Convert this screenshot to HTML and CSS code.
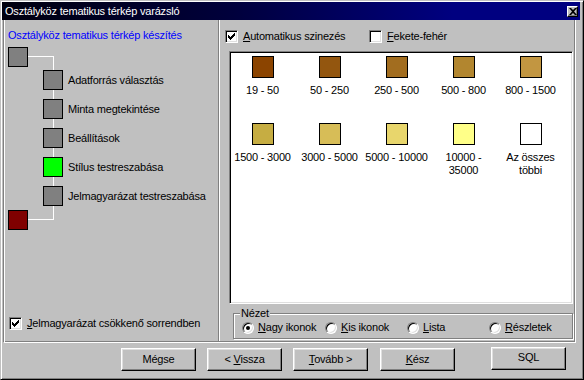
FILE: index.html
```html
<!DOCTYPE html>
<html lang="hu">
<head>
    <meta charset="UTF-8">
    <title>Osztályköz tematikus térkép varázsló</title>
    <link rel="stylesheet" href="styles.css">
</head>
<body>
<div class="window">
    <div class="titlebar">
        <span class="title">Osztályköz tematikus térkép varázsló</span>
        <span class="close">
            <svg width="8" height="7" viewBox="0 0 8 7"><path d="M0 0h2l2 2 2-2h2L5 3.5 8 7H6L4 5 2 7H0l3-3.5z" fill="#000"/></svg>
        </span>
    </div>

    <div class="frame">
        <div class="steps-panel">
            <div class="heading">Osztályköz tematikus térkép készítés</div>
            <div class="tree">
                <div class="line line-top"></div>
                <div class="line line-down"></div>
                <div class="line line-bottom"></div>
                <div class="node"></div>
                <ul class="steps">
                    <li><span class="node"></span>Adatforrás választás</li>
                    <li><span class="node"></span>Minta megtekintése</li>
                    <li><span class="node"></span>Beállítások</li>
                    <li><span class="node node-current"></span>Stílus testreszabása</li>
                    <li><span class="node"></span>Jelmagyarázat testreszabása</li>
                </ul>
                <div class="node node-end"></div>
            </div>
            <label class="check sort-check">
                <span class="box"><svg width="9" height="9" viewBox="-1 -1 9 9"><path d="M0 2h1v1h1v1h1V3h1V2h1V1h1V0h1v3H6v1H5v1H4v1H3v1H2V6H1V5H0z" fill="#000"/></svg></span>
                <span><u>J</u>elmagyarázat csökkenő sorrendben</span>
            </label>
        </div>

        <div class="legend-panel">
            <div class="check-row">
                <label class="check check-auto">
                    <span class="box"><svg width="9" height="9" viewBox="-1 -1 9 9"><path d="M0 2h1v1h1v1h1V3h1V2h1V1h1V0h1v3H6v1H5v1H4v1H3v1H2V6H1V5H0z" fill="#000"/></svg></span>
                    <span><u>A</u>utomatikus szinezés</span>
                </label>
                <label class="check">
                    <span class="box"></span>
                    <span><u>F</u>ekete-fehér</span>
                </label>
            </div>

            <div class="listview">
                <div class="items">
                    <div class="item"><span class="swatch" style="background:#8b4400"></span><span class="caption">19 - 50</span></div>
                    <div class="item"><span class="swatch" style="background:#93560f"></span><span class="caption">50 - 250</span></div>
                    <div class="item"><span class="swatch" style="background:#a26d1f"></span><span class="caption">250 - 500</span></div>
                    <div class="item"><span class="swatch" style="background:#b2862f"></span><span class="caption">500 - 800</span></div>
                    <div class="item"><span class="swatch" style="background:#c29641"></span><span class="caption">800 - 1500</span></div>
                    <div class="item"><span class="swatch" style="background:#c6ad42"></span><span class="caption">1500 - 3000</span></div>
                    <div class="item"><span class="swatch" style="background:#d7bd57"></span><span class="caption">3000 - 5000</span></div>
                    <div class="item"><span class="swatch" style="background:#e8d66c"></span><span class="caption">5000 - 10000</span></div>
                    <div class="item"><span class="swatch" style="background:#ffff88"></span><span class="caption">10000 - 35000</span></div>
                    <div class="item"><span class="swatch" style="background:#ffffff"></span><span class="caption">Az összes többi</span></div>
                </div>
            </div>

            <div class="group">
                <span class="group-title">Nézet</span>
                <div class="radios">
                    <label class="opt"><span class="radio on"></span><span><u>N</u>agy ikonok</span></label>
                    <label class="opt"><span class="radio"></span><span><u>K</u>is ikonok</span></label>
                    <label class="opt"><span class="radio"></span><span><u>L</u>ista</span></label>
                    <label class="opt"><span class="radio"></span><span><u>R</u>észletek</span></label>
                </div>
            </div>
        </div>
    </div>

    <div class="buttons">
        <button class="btn">Mégse</button>
        <button class="btn">&lt; <u>V</u>issza</button>
        <button class="btn"><u>T</u>ovább &gt;</button>
        <button class="btn btn-done"><u>K</u>ész</button>
        <button class="btn btn-sql">SQL</button>
    </div>
</div>
</body>
</html>
```

FILE: styles.css
```css
*{
    margin: 0;
    padding: 0;
    box-sizing: border-box;
}
body{
    background-color: #c0c0c0;
    font: 11px/13px "Liberation Sans", Arial, sans-serif;
    letter-spacing: -0.2px;
    color: #000;
}
.window{
    width: 584px;
    height: 380px;
    display: flex;
    flex-direction: column;
    background-color: #c0c0c0;
    border: 1px solid;
    border-color: #c0c0c0 #000 #000 #c0c0c0;
    box-shadow: inset 1px 1px #fff, inset -1px -1px #808080;
    padding: 1px 3px 3px 1px;
}

/* title bar */
.titlebar{
    height: 18px;
    flex: none;
    display: flex;
    align-items: center;
    justify-content: space-between;
    padding: 0 2px 0 3px;
    background: linear-gradient(90deg, #00000e, #00003c 40%, #000080 78%);
    color: #fff;
}
.close{
    width: 11px;
    height: 11px;
    display: flex;
    align-items: center;
    justify-content: center;
    background-color: #c0c0c0;
    border: 1px solid;
    border-color: #fff #000 #000 #fff;
    box-shadow: inset -1px -1px #808080;
}

/* main frame */
.frame{
    height: 323px;
    flex: none;
    display: flex;
    margin: 0 4px 0 1px;
    border: 1px solid;
    border-top: 0;
    border-color: #fff #fff #fff #808080;
    padding: 0 1px 1px 1px;
    box-shadow: inset 1px 0 #fff, inset -1px -1px #808080;
}

/* left side: steps */
.steps-panel{
    width: 214px;
    display: flex;
    flex-direction: column;
    border-right: 1px solid #808080;
    padding: 9px 0 11px 3px;
}
.heading{
    color: #0000ff;
}
.tree{
    position: relative;
    margin-top: 5px;
}
.tree .line{
    position: absolute;
    background-color: #fff;
}
.line-top{
    left: 20px;
    top: 9px;
    width: 26px;
    height: 1px;
}
.line-down{
    left: 45px;
    top: 9px;
    width: 1px;
    height: 164px;
}
.line-bottom{
    left: 20px;
    top: 172px;
    width: 26px;
    height: 1px;
}
.node{
    position: relative;
    display: block;
    width: 20px;
    height: 20px;
    flex: none;
    border: 1px solid #000;
    background-color: #808080;
}
.node-current{
    background-color: #00ff00;
}
.node-end{
    background-color: #800000;
}
.steps{
    list-style: none;
    margin: 3px 0 4px 35px;
    display: flex;
    flex-direction: column;
    gap: 9px;
}
.steps li{
    display: flex;
    align-items: center;
    gap: 5px;
    height: 20px;
}
.sort-check{
    margin: auto 0 0 1px;
}

/* check boxes */
.check{
    display: flex;
    align-items: center;
    gap: 5px;
    height: 13px;
}
.box{
    width: 13px;
    height: 13px;
    flex: none;
    display: flex;
    align-items: center;
    justify-content: center;
    background-color: #fff;
    border: 1px solid;
    border-color: #808080 #fff #fff #808080;
    box-shadow: inset 1px 1px #000, inset -1px -1px #dfdfdf;
}

/* right side: legend */
.legend-panel{
    flex: 1;
    display: flex;
    flex-direction: column;
    align-items: flex-start;
    border-left: 1px solid #fff;
    padding: 10px 0 1px 5px;
}
.check-row{
    display: flex;
}
.check-auto{
    width: 144px;
}
.listview{
    width: 344px;
    height: 253px;
    margin: 8px 0 0 4px;
    background-color: #fff;
    border: 1px solid;
    border-color: #808080 #fff #fff #808080;
    box-shadow: inset 1px 1px #000, inset -1px -1px #dfdfdf;
    padding-top: 4px;
}
.items{
    display: grid;
    grid-template-columns: repeat(5, 67px);
    grid-auto-rows: 67px;
    margin-left: -1px;
}
.item{
    display: flex;
    flex-direction: column;
    align-items: center;
}
.swatch{
    width: 22px;
    height: 22px;
    border: 1px solid #000;
    margin-bottom: 6px;
}
.caption{
    width: 66px;
    text-align: center;
}

/* view group */
.group{
    position: relative;
    width: 340px;
    height: 26px;
    margin: 9px 0 0 8px;
    border: 1px solid #808080;
    box-shadow: inset 1px 1px #fff, 1px 1px #fff;
    padding: 7px 0 0 8px;
}
.group-title{
    position: absolute;
    top: -7px;
    left: 6px;
    padding: 0 1px;
    background-color: #c0c0c0;
}
.radios{
    display: grid;
    grid-template-columns: 83px 82px 82px auto;
}
.opt{
    display: flex;
    align-items: center;
    gap: 4px;
    height: 13px;
}
.radio{
    position: relative;
    width: 12px;
    height: 12px;
    border-radius: 50%;
    background-color: #fff;
    border: 1px solid;
    border-color: #808080 #fff #fff #808080;
    box-shadow: inset 1px 1px #000, inset -1px -1px #dfdfdf;
}
.radio.on::after{
    content: '';
    position: absolute;
    left: 3px;
    top: 3px;
    width: 4px;
    height: 4px;
    border-radius: 50%;
    background-color: #000;
}

/* bottom buttons */
.buttons{
    flex: 1;
    display: flex;
    justify-content: flex-end;
    align-items: flex-start;
    padding: 5px 14px 0 0;
}
.btn{
    width: 75px;
    height: 23px;
    margin-left: 11px;
    font: inherit;
    letter-spacing: inherit;
    color: #000;
    background-color: #c0c0c0;
    border: 1px solid;
    border-color: #fff #000 #000 #fff;
    box-shadow: inset -1px -1px #808080, inset 1px 1px #dfdfdf;
}
.btn-done{
    margin-left: 12px;
}
.btn-sql{
    margin-left: 36px;
    margin-top: -1px;
    padding-bottom: 2px;
}
```
